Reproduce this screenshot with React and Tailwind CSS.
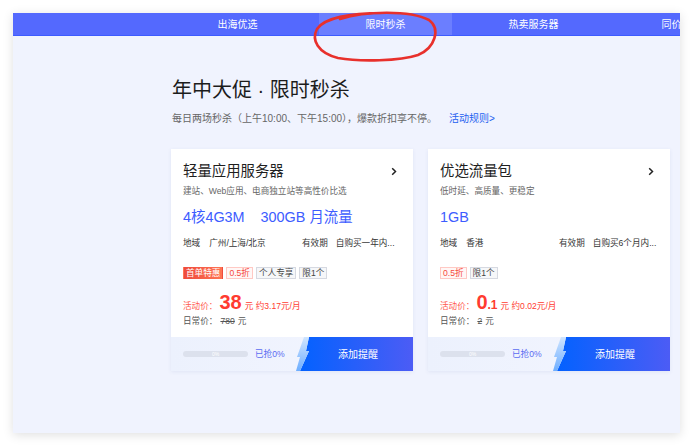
import React from "react";

const tabs = [
  { label: "出海优选" },
  { label: "限时秒杀", active: true },
  { label: "热卖服务器" },
  { label: "同价续费" },
];

const cards = [
  {
    title: "轻量应用服务器",
    sub: "建站、Web应用、电商独立站等高性价比选",
    specs: ["4核4G3M", "300GB 月流量"],
    region: "广州/上海/北京",
    valid: "自购买一年内...",
    tags: [
      { text: "首单特惠", kind: "hot" },
      { text: "0.5折", kind: "red" },
      { text: "个人专享", kind: "gray" },
      { text: "限1个", kind: "gray" },
    ],
    priceInt: "38",
    priceDec: "",
    per: "约3.17元/月",
    daily: "780",
  },
  {
    title: "优选流量包",
    sub: "低时延、高质量、更稳定",
    specs: ["1GB"],
    region: "香港",
    valid: "自购买6个月内...",
    tags: [
      { text: "0.5折", kind: "red" },
      { text: "限1个", kind: "gray" },
    ],
    priceInt: "0",
    priceDec: ".1",
    per: "约0.02元/月",
    daily: "2",
  },
];

const tagClass = {
  hot: "bg-[linear-gradient(90deg,#ee4b3d,#ff7453)] text-white border border-transparent",
  red: "border border-[#ffc9c4] text-[#f5483b] bg-[#fff7f6]",
  gray: "border border-[#d6d9e1] text-[#444] bg-[#f6f7f9]",
};

function Chevron() {
  return (
    <svg width="6" height="9" viewBox="0 0 6 9" className="mr-[4px]">
      <path d="M1.2 1.2 L4.5 4.5 L1.2 7.8" fill="none" stroke="#222" strokeWidth="1.5" />
    </svg>
  );
}

function RemindButton() {
  return (
    <div className="relative w-[118px] h-full shrink-0">
      <div className="absolute inset-0 bg-[linear-gradient(90deg,#0062ff,#4c5cf5)] [clip-path:polygon(14px_0,100%_0,100%_100%,5px_100%,14px_14px,11px_14px)]" />
      <svg className="absolute left-0 top-0" width="16" height="34" viewBox="0 0 16 34">
        <defs>
          <linearGradient id="bolt" x1="0" y1="0" x2="0" y2="1">
            <stop offset="0" stopColor="#cfe5ff" />
            <stop offset="1" stopColor="#6eaeff" />
          </linearGradient>
        </defs>
        <polygon points="9,0 14,0 11,14 14,14 5,34 1,34 5,20 2,20" fill="url(#bolt)" />
      </svg>
      <div className="relative h-full flex items-center justify-center pl-[8px] text-[10px] text-white">
        添加提醒
      </div>
    </div>
  );
}

function Card({ c }) {
  return (
    <div className="w-[242px] h-[222px] bg-white shadow-[0_1px_4px_rgba(40,60,140,0.08)] flex flex-col shrink-0">
      <div className="flex-1 px-[12px] pt-[12px]">
        <div className="flex items-center justify-between">
          <span className="text-[14.4px] leading-[20px] text-[#1e1e1e]">{c.title}</span>
          <Chevron />
        </div>
        <div className="mt-[4px] text-[8.6px] leading-[12px] text-[#666]">{c.sub}</div>
        <div className="mt-[11px] flex gap-[16px] text-[14.4px] leading-[18px] text-[#3d5cff]">
          {c.specs.map((s) => (
            <span key={s}>{s}</span>
          ))}
        </div>
        <div className="mt-[11px] flex text-[8.6px] leading-[12px] text-[#333]">
          <div className="w-[119px] flex gap-[9px]">
            <span>地域</span>
            <span>{c.region}</span>
          </div>
          <div className="flex gap-[8px]">
            <span>有效期</span>
            <span>{c.valid}</span>
          </div>
        </div>
        <div className="mt-[18px] flex gap-[3px]">
          {c.tags.map((t) => (
            <span
              key={t.text}
              className={`h-[12px] px-[2px] flex items-center text-[8.6px] ${tagClass[t.kind]}`}
            >
              {t.text}
            </span>
          ))}
        </div>
        <div className="mt-[13px] flex items-baseline leading-[20px] text-[#ff3b30]">
          <span className="text-[8.6px] text-[#ff5a4f]">活动价：</span>
          <span className="ml-[2px] text-[20px] font-bold">{c.priceInt}</span>
          {c.priceDec && <span className="text-[12px] font-bold">{c.priceDec}</span>}
          <span className="ml-[3px] text-[8.6px]">元 {c.per}</span>
        </div>
        <div className="-mt-[1px] flex text-[8.6px] leading-[12px] text-[#555]">
          <span>日常价：</span>
          <span className="ml-[3px] line-through">{c.daily}</span>
          <span className="ml-[3px]">元</span>
        </div>
      </div>
      <div className="h-[34px] flex bg-[linear-gradient(90deg,#ecf1fd,#f4f6ff)]">
        <div className="flex-1 flex items-center pl-[12px]">
          <div className="relative w-[65px] h-[6px] rounded-full bg-[#dce1ed] flex items-center justify-center">
            <span className="text-[5px] leading-[6px] text-white">0%</span>
          </div>
          <span className="ml-[7px] text-[8.6px] text-[#5b6cf2]">已抢0%</span>
        </div>
        <RemindButton />
      </div>
    </div>
  );
}

export default function App() {
  return (
    <div className="relative w-[690px] h-[446px] bg-white overflow-hidden font-['Liberation_Sans','Noto_Sans_CJK_SC',sans-serif]">
      <div className="ml-[13px] mt-[13px] w-[667px] h-[420px] bg-[#f0f3fe] overflow-hidden shadow-[0_2px_10px_rgba(0,0,0,0.13)]">
        <nav className="h-[23px] bg-[#5469fe] border-b border-[#3d5bff] flex gap-[15px] pl-[158px]">
          {tabs.map((t) => (
            <div
              key={t.label}
              className={`w-[133px] shrink-0 flex items-center justify-center text-[10px] text-white ${
                t.active ? "bg-[#6b7eff]" : ""
              }`}
            >
              {t.label}
            </div>
          ))}
        </nav>
        <main className="pl-[158px]">
          <h1 className="mt-[41px] pl-[1px] text-[20px] leading-[26px] text-[#1c1c1c]">年中大促 · 限时秒杀</h1>
          <p className="mt-[9px] pl-[1px] text-[10px] leading-[14px] text-[#666]">
            每日两场秒杀（上午10:00、下午15:00），爆款折扣享不停。
            <span className="ml-[12px] text-[#2561f0]">活动规则&gt;</span>
          </p>
          <div className="mt-[23px] flex gap-[15px]">
            {cards.map((c) => (
              <Card key={c.title} c={c} />
            ))}
          </div>
        </main>
      </div>
      <svg className="absolute inset-0 pointer-events-none" width="690" height="446" viewBox="0 0 690 446">
        <path
          d="M340 19 C365 11, 410 10, 429 20 C441 29, 435 48, 418 55 C400 61, 360 62, 338 58 C318 53, 311 40, 317 29 C324 18, 350 13, 382 13"
          fill="none"
          stroke="#e8302c"
          strokeWidth="2.6"
          strokeLinecap="round"
        />
      </svg>
    </div>
  );
}
